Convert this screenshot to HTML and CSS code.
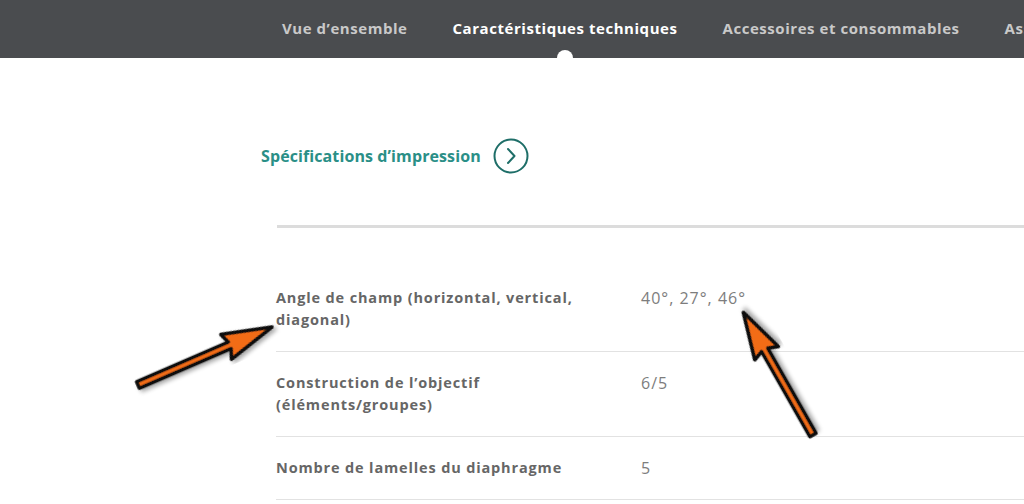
FILE: index.html
```html
<!DOCTYPE html>
<html lang="fr">
<head>
  <meta charset="UTF-8">
  <title>Caractéristiques techniques</title>
  <link rel="stylesheet" href="styles.css">
</head>
<body>

  <nav class="tabs">
    <a class="tab">Vue d’ensemble</a>
    <a class="tab active">Caractéristiques techniques</a>
    <a class="tab">Accessoires et consommables</a>
    <a class="tab">Assistance</a>
  </nav>

  <main class="specs">
    <div class="section-title">
      <span>Spécifications d’impression</span>
      <svg class="round-btn" width="36" height="36" viewBox="0 0 36 36">
        <circle cx="18" cy="18" r="16.5" fill="none" stroke="#1e6e68" stroke-width="2"/>
        <path d="M15 11 L21.5 18 L15 25" fill="none" stroke="#1e6e68" stroke-width="2" stroke-linecap="round" stroke-linejoin="round"/>
      </svg>
    </div>

    <div class="rule"></div>

    <table class="spec-table">
      <tr>
        <td class="label">Angle de champ (horizontal, vertical, diagonal)</td>
        <td class="value">40°, 27°, 46°</td>
      </tr>
      <tr>
        <td class="label">Construction de l’objectif (éléments/groupes)</td>
        <td class="value">6/5</td>
      </tr>
      <tr>
        <td class="label">Nombre de lamelles du diaphragme</td>
        <td class="value">5</td>
      </tr>
    </table>
  </main>

  <!-- annotation arrows drawn over the screenshot -->
  <svg class="arrows" width="1024" height="504" viewBox="0 0 1024 504">
    <defs>
      <filter id="shadow" x="-20%" y="-20%" width="140%" height="140%">
        <feDropShadow dx="2" dy="3" stdDeviation="2" flood-color="#000" flood-opacity="0.35"/>
      </filter>
    </defs>
    <g filter="url(#shadow)" transform="translate(138 385) rotate(-23.4)">
      <polygon points="0,-3.5 100,-3.5 96,-13.5 146,0 96,13.5 100,3.5 0,3.5" fill="#f26c16" stroke="#111" stroke-width="3.5" stroke-linejoin="round"/>
    </g>
    <g filter="url(#shadow)" transform="translate(813 435) rotate(-119.6)">
      <polygon points="0,-3.5 98,-3.5 94,-13.5 141,0 94,13.5 98,3.5 0,3.5" fill="#f26c16" stroke="#111" stroke-width="3.5" stroke-linejoin="round"/>
    </g>
  </svg>

</body>
</html>
```

FILE: styles.css
```css
* { box-sizing: border-box; }
body {
  margin: 0;
  font-family: 'Open Sans', 'Liberation Sans', sans-serif;
  background: #fff;
  width: 1024px;
  height: 504px;
  overflow: hidden;
  position: relative;
}
.tabs {
  height: 58px;
  background: #4a4c4f;
  display: flex;
  align-items: center;
  gap: 45px;
  padding-left: 282px;
  white-space: nowrap;
  overflow: hidden;
  position: relative;
}
.tab {
  color: #c9c9c9;
  font-size: 15px;
  font-weight: 700;
  letter-spacing: 0.55px;
  position: relative;
  height: 58px;
  line-height: 56px;
  cursor: pointer;
}
.tab.active {
  color: #fff;
}
.tab.active::after {
  content: "";
  position: absolute;
  left: 50%;
  bottom: -8px;
  width: 16px;
  height: 16px;
  margin-left: -8px;
  border-radius: 50%;
  background: #fff;
}
.specs {
  padding: 80px 0 0 261px;
}
.section-title {
  display: flex;
  align-items: center;
  gap: 12px;
  height: 36px;
  color: #2a8f87;
  font-size: 16px;
  font-weight: 700;
  letter-spacing: 0.1px;
}
.round-btn {
  display: block;
}
.rule {
  margin: 51px 0 0 16px;
  height: 3px;
  background: #dcdcdc;
}
.spec-table {
  margin: 39px 0 0 15px;
  width: 748px;
  border-collapse: collapse;
  font-size: 14.5px;
  line-height: 22px;
}
.spec-table td {
  padding: 20px 0;
  border-bottom: 1px solid #e2e2e2;
  vertical-align: top;
}
.spec-table .label {
  width: 365px;
  padding-right: 50px;
  color: #666;
  font-weight: 700;
  letter-spacing: 0.85px;
}
.spec-table .value {
  color: #7d7d7d;
  font-size: 16px;
  letter-spacing: 1px;
}
.arrows {
  position: absolute;
  top: 0;
  left: 0;
  pointer-events: none;
}
```
